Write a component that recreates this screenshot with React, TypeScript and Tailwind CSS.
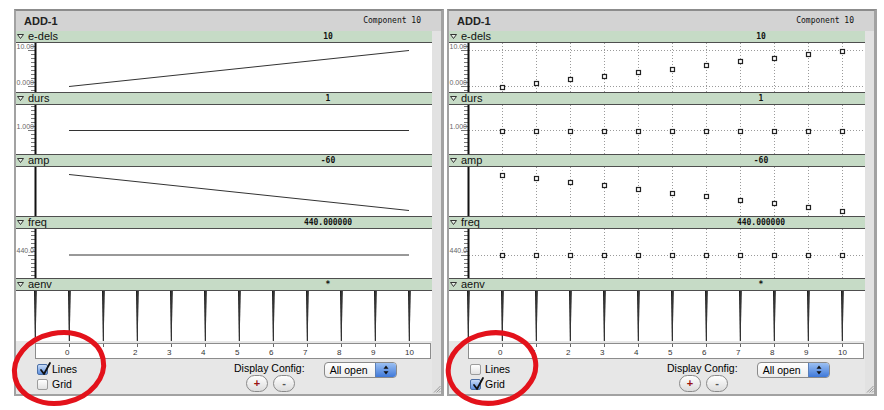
import React from "react";

type Kind = "edels" | "durs" | "amp" | "freq" | "aenv";

// x of sample 0..10 inside the 416px content column
const PX = Array.from({ length: 11 }, (_, i) => 53 + 34 * i);

const TRACKS: { kind: Kind; name: string; value: string }[] = [
  { kind: "edels", name: "e-dels", value: "10" },
  { kind: "durs", name: "durs", value: "1" },
  { kind: "amp", name: "amp", value: "-60" },
  { kind: "freq", name: "freq", value: "440.000000" },
  { kind: "aenv", name: "aenv", value: "*" },
];

const SCALE: Partial<Record<Kind, { major: number[]; labels: [string, number][] }>> = {
  edels: { major: [7, 43], labels: [["10.00", 5.5], ["0.000", 41.5]] },
  durs: { major: [25.5], labels: [["1.000", 23.5]] },
  freq: { major: [26], labels: [["440.0", 23.5]] },
};

function yAt(kind: Kind, i: number) {
  if (kind === "edels") return 43.5 - 3.6 * i;
  if (kind === "amp") return 7.5 + 3.6 * i;
  if (kind === "durs") return 25.5;
  return 26;
}

function Plot({ kind, grid }: { kind: Kind; grid: boolean }) {
  const scale = SCALE[kind];
  const h = kind === "aenv" ? 50 : 49;
  const ticks: number[] = [];
  if (scale) {
    for (let y = scale.major[0] % 4; y < 48; y += 4) if (y > 0.5) ticks.push(y);
  }
  const pts = PX.map((x, i) => [x, yAt(kind, i)] as const);

  return (
    <svg width={416} height={h} className="block bg-white">
      {grid &&
        PX.map((x) => (
          <line key={x} x1={x + 0.5} x2={x + 0.5} y1={0} y2={h} stroke="#9a9a9a" strokeDasharray="1 2" />
        ))}
      {grid &&
        scale?.major.map((y) => (
          <line key={y} x1={20} x2={416} y1={Math.floor(y) + 0.5} y2={Math.floor(y) + 0.5} stroke="#9a9a9a" strokeDasharray="1 2" />
        ))}

      {scale?.labels.map(([t, y]) => (
        <text key={t} x={0.5} y={y} fontSize={7} fill="#666" fontFamily="Liberation Sans, Arial, sans-serif">
          {t}
        </text>
      ))}
      {ticks.map((y) => {
        const major = scale?.major.some((m) => Math.abs(m - y) < 1);
        return (
          <line key={y} x1={major ? 12 : 15} x2={19} y1={Math.floor(y) + 0.5} y2={Math.floor(y) + 0.5} stroke="#777" />
        );
      })}

      {kind === "aenv" ? (
        [19, ...PX].map((x) => (
          <g key={x}>
            <polygon points={`${x - 1},0 ${x + 1.8},0 ${x + 0.6},${h} ${x - 0.2},${h}`} fill="#1a1a1a" />
            <line x1={x + 0.5} x2={x + 0.5} y1={0} y2={h} stroke="#333" />
          </g>
        ))
      ) : (
        <rect x={18.5} y={0} width={2} height={h} fill="#111" />
      )}

      {kind !== "aenv" &&
        (grid ? (
          pts.map(([x, y]) => (
            <rect key={x} x={x - 1.5} y={Math.round(y) - 1.5} width={4} height={4} fill="#fff" stroke="#222" strokeWidth={1.2} />
          ))
        ) : (
          <polyline points={pts.map(([x, y]) => `${x},${y}`).join(" ")} fill="none" stroke="#333" strokeWidth={1} />
        ))}
    </svg>
  );
}

function Check({ checked, label }: { checked: boolean; label: string }) {
  return (
    <div className="flex items-center gap-[4px] h-[15px]">
      <div
        className={
          checked
            ? "relative w-[11px] h-[11px] rounded-[2px] border border-[#4b6fa6] bg-gradient-to-b from-[#c9dcf7] to-[#5d8fdf]"
            : "relative w-[11px] h-[11px] rounded-[2px] border border-[#9c9c9c] bg-gradient-to-b from-white to-[#e2e2e2]"
        }
      >
        {checked && (
          <svg width="14" height="14" className="absolute left-[1px] top-[-4px] overflow-visible">
            <path d="M2 9 L5 13 L11 2" fill="none" stroke="#111" strokeWidth={1.8} strokeLinecap="round" strokeLinejoin="round" />
          </svg>
        )}
      </div>
      <span className="text-[10.5px] leading-[13px] text-black">{label}</span>
    </div>
  );
}

function RoundButton({ children, red }: { children: React.ReactNode; red?: boolean }) {
  return (
    <div
      className={
        red
          ? "w-[22px] h-[17px] rounded-[9px] border border-[#8a8a8a] bg-gradient-to-b from-white to-[#dcdcdc] flex items-center justify-center text-[11px] leading-none font-bold text-[#9a1212]"
          : "w-[22px] h-[17px] rounded-[9px] border border-[#8a8a8a] bg-gradient-to-b from-white to-[#dcdcdc] flex items-center justify-center text-[11px] leading-none font-bold text-[#555]"
      }
    >
      {children}
    </div>
  );
}

function Window({ grid }: { grid: boolean }) {
  return (
    <div className="w-[430px] h-[387px] flex flex-col border-2 border-r-[3px] border-[#a2a2a2] border-t-[#8c8c8c] bg-[#e7e7e7]">
      <div className="h-[20px] flex items-center justify-between pl-[8px] pr-[20px] bg-[#d3d3d3]">
        <span className="text-[11px] font-bold text-[#222]">ADD-1</span>
        <span className="text-[8px] font-['DejaVu_Sans_Mono',monospace] text-[#111]">Component 10</span>
      </div>
      <div className="flex flex-1">
        <div className="w-[416px] flex flex-col">
          {TRACKS.map((t, idx) => (
            <div key={t.kind} className="flex flex-col">
              <div className="h-[12px] flex items-center bg-[#c6dbc6] border-b border-[#4e4e4e]">
                <div className="w-[208px] flex items-center gap-[4px] pl-[1px]">
                  <svg width="7" height="5" className="block">
                    <polygon points="0.5,0.5 6.5,0.5 3.5,4.5" fill="#e6eee6" stroke="#333" strokeWidth={1} />
                  </svg>
                  <span className="text-[11px] leading-[11px] text-[#111]">{t.name}</span>
                </div>
                <div className="flex-1 text-center text-[8px] leading-[11px] font-bold font-['DejaVu_Sans_Mono',monospace] text-[#111]">
                  {t.value}
                </div>
              </div>
              <div className={idx < 4 ? "border-b border-[#4e4e4e]" : ""}>
                <Plot kind={t.kind} grid={grid} />
              </div>
            </div>
          ))}
          <div className="mt-[2px] ml-[19px] w-[396px] h-[16px] border border-[#8c8c8c] bg-white">
            <svg width={394} height={14} className="block">
              {PX.map((x, i) => (
                <g key={x}>
                  <line x1={x - 20 + 0.5} x2={x - 20 + 0.5} y1={0} y2={3} stroke="#666" />
                  <text x={x - 24} y={11} fontSize={8} fill="#333" fontFamily="Liberation Sans, Arial, sans-serif">
                    {i}
                  </text>
                </g>
              ))}
            </svg>
          </div>
          <div className="h-[35px] flex pl-[21px] pt-[3px]">
            <div className="w-[197px] flex flex-col">
              <Check checked={!grid} label="Lines" />
              <Check checked={grid} label="Grid" />
            </div>
            <div className="flex flex-col">
              <span className="text-[10.5px] leading-[13px] text-black">Display Config:</span>
              <div className="flex gap-[5px] ml-[12px]">
                <RoundButton red>+</RoundButton>
                <RoundButton>-</RoundButton>
              </div>
            </div>
            <div className="ml-[19px] w-[73px] h-[16px] flex rounded-[4px] border border-[#8a8a8a] bg-gradient-to-b from-white to-[#ececec] overflow-hidden">
              <span className="flex-1 pl-[5px] text-[10.5px] leading-[14px] text-black">All open</span>
              <div className="w-[21px] flex items-center justify-center bg-gradient-to-b from-[#9cc0f2] to-[#3f78d8] border-l border-[#5a7fb8]">
                <svg width="6" height="10" className="block">
                  <polygon points="3,0.5 5.5,3.8 0.5,3.8" fill="#111" />
                  <polygon points="0.5,6.2 5.5,6.2 3,9.5" fill="#111" />
                </svg>
              </div>
            </div>
          </div>
        </div>
        <div className="w-[9px] flex flex-col justify-end bg-[#e2e2e2]">
          <svg width="9" height="9" className="block mb-[1px]">
            <line x1="2" y1="8.5" x2="8.5" y2="2" stroke="#999" />
            <line x1="4.5" y1="8.5" x2="8.5" y2="4.5" stroke="#999" />
            <line x1="7" y1="8.5" x2="8.5" y2="7" stroke="#999" />
          </svg>
        </div>
      </div>
    </div>
  );
}

export default function App() {
  return (
    <div className="relative w-[884px] h-[410px] bg-white overflow-hidden font-['Liberation_Sans',Arial,sans-serif]">
      <div className="flex gap-[3px] pl-[14px] pt-[9px]">
        <Window grid={false} />
        <Window grid />
      </div>
      <svg width={884} height={410} className="absolute inset-0 pointer-events-none">
        <ellipse cx={59} cy={368} rx={45} ry={35} fill="none" stroke="#e3121b" strokeWidth={5} transform="rotate(-12 59 368)" />
        <ellipse cx={492} cy={368} rx={44} ry={35} fill="none" stroke="#e3121b" strokeWidth={5} transform="rotate(-10 492 368)" />
      </svg>
    </div>
  );
}
